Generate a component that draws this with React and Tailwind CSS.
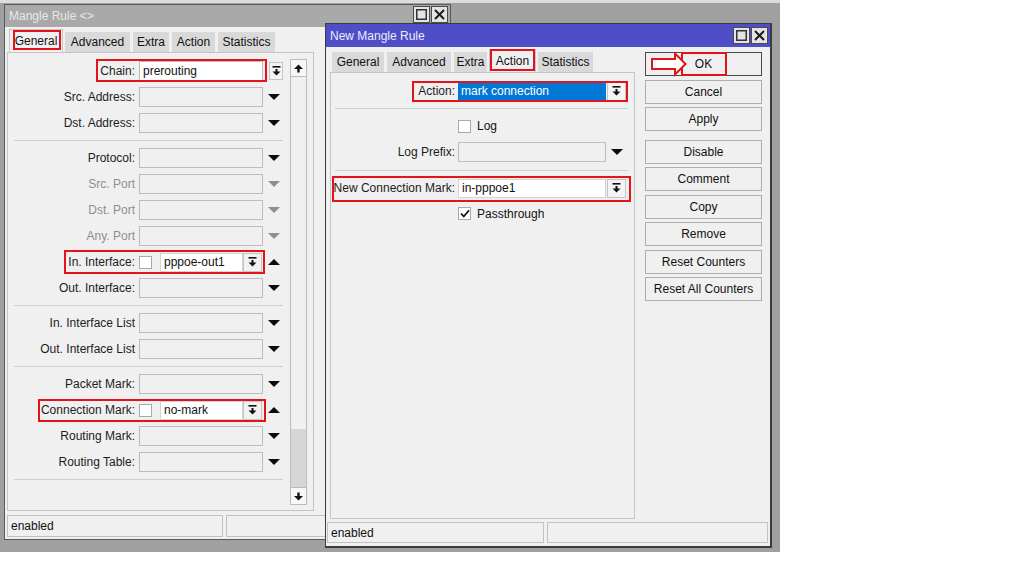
const RED = "border-[#e3131b]";

function DownBar() {
  return (
    <svg width="9" height="10" viewBox="0 0 9 10">
      <rect x="0.5" y="0" width="8" height="1.6" fill="#111" />
      <rect x="3.5" y="3" width="2" height="3" fill="#111" />
      <polygon points="0.5,5.5 8.5,5.5 4.5,9.5" fill="#111" />
    </svg>
  );
}

function TriDown({ dim }) {
  return (
    <svg width="12" height="6" viewBox="0 0 12 6">
      <polygon points="0,0 12,0 6,6" fill={dim ? "#8f8f8f" : "#0c0c0c"} />
    </svg>
  );
}

function TriUp() {
  return (
    <svg width="12" height="6" viewBox="0 0 12 6">
      <polygon points="0,6 12,6 6,0" fill="#0c0c0c" />
    </svg>
  );
}

function ScrollArrow({ up }) {
  return (
    <svg width="9" height="9" viewBox="0 0 9 9">
      {up ? (
        <>
          <polygon points="4.5,0.5 9,5 0,5" fill="#111" />
          <rect x="3.3" y="5" width="2.4" height="3.5" fill="#111" />
        </>
      ) : (
        <>
          <rect x="3.3" y="0.5" width="2.4" height="3.5" fill="#111" />
          <polygon points="0,4 9,4 4.5,8.5" fill="#111" />
        </>
      )}
    </svg>
  );
}

function TitleButtons() {
  return (
    <div className="flex gap-[1px]">
      <span className="flex h-[17px] w-[17px] items-center justify-center border border-[#4a4a4a] bg-[#e4e4e4]">
        <svg width="11" height="11" viewBox="0 0 11 11">
          <rect x="0.75" y="0.75" width="9.5" height="9.5" fill="none" stroke="#333" strokeWidth="1.5" />
        </svg>
      </span>
      <span className="flex h-[17px] w-[17px] items-center justify-center border border-[#4a4a4a] bg-[#e4e4e4]">
        <svg width="11" height="11" viewBox="0 0 11 11">
          <path d="M1 1 L10 10 M10 1 L1 10" stroke="#1a1a1a" strokeWidth="2" />
        </svg>
      </span>
    </div>
  );
}

function Tab({ label, width, active, redBox }) {
  return (
    <div
      className={`relative flex items-center justify-center ${width} ${
        active
          ? "h-[23px] border border-b-0 border-[#c6c6c6] bg-[#f0f0f0]"
          : "h-[21px] border border-b-0 border-[#f0f0f0] bg-[#d9d9d9]"
      } text-[#111]`}
    >
      {label}
      {redBox && <div className={`absolute ${redBox} border-2 ${RED}`} />}
    </div>
  );
}

function Label({ children, dim, w }) {
  return (
    <div className={`${w} shrink-0 whitespace-nowrap text-right ${dim ? "text-[#8e8e8e]" : "text-[#1c1c1c]"}`}>
      {children}
    </div>
  );
}

function Sep({ h, w, ml }) {
  return (
    <div className={`flex ${h} items-center`}>
      <div className={`${ml} ${w} h-[1px] bg-[#cfcfcf]`} />
    </div>
  );
}

function Checkbox({ checked }) {
  return (
    <span className="flex h-[13px] w-[13px] shrink-0 items-center justify-center border border-[#a9a9a9] bg-white">
      {checked && (
        <svg width="10" height="9" viewBox="0 0 10 9">
          <path d="M1 4.5 L3.8 7.5 L9 1.2" fill="none" stroke="#111" strokeWidth="1.8" />
        </svg>
      )}
    </span>
  );
}

function EmptyRow({ label, dim }) {
  return (
    <div className="flex h-[26px] items-center">
      <Label w="w-[127px]" dim={dim}>
        {label}
      </Label>
      <div className="ml-[4px] h-[20px] w-[124px] border border-[#bcbcbc] bg-[#f0f0f0]" />
      <div className="ml-[5px] flex">
        <TriDown dim={dim} />
      </div>
    </div>
  );
}

function CheckRow({ label, value, redBox }) {
  return (
    <div className="relative flex h-[26px] items-center">
      <Label w="w-[127px]">{label}</Label>
      <div className="ml-[4px]">
        <Checkbox />
      </div>
      <div className="ml-[8px] flex h-[19px] w-[83px] items-center border border-[#d4d4d4] bg-white pl-[3px] text-[#111]">
        {value}
      </div>
      <div className="flex h-[19px] w-[19px] items-center justify-center border border-[#c4c4c4] bg-[#f2f2f2]">
        <DownBar />
      </div>
      <div className="ml-[6px] flex">
        <TriUp />
      </div>
      <div className={`absolute ${redBox} border-2 ${RED}`} />
    </div>
  );
}

function LeftWindow() {
  return (
    <div className="absolute left-[4px] top-[1px] flex h-[536px] w-[447px] flex-col border border-[#5a5a5a] bg-[#f0f0f0]">
      <div className="flex h-[22px] items-start justify-between bg-[#a9a9a9] pl-[4px] pr-[2px] pt-[1px]">
        <span className="leading-[20px] text-[#e8e8e8]">Mangle Rule &lt;&gt;</span>
        <TitleButtons />
      </div>
      <div className="flex h-[25px] items-end gap-[1px] pl-[4px]">
        <Tab label="General" width="w-[54px]" active redBox="left-[3px] right-[1px] top-[0px] bottom-[2px]" />
        <Tab label="Advanced" width="w-[67px]" />
        <Tab label="Extra" width="w-[38px]" />
        <Tab label="Action" width="w-[45px]" />
        <Tab label="Statistics" width="w-[59px]" />
      </div>
      <div className="ml-[2px] flex h-[459px] w-[307px] border border-[#c6c6c6]">
        <div className="flex flex-1 flex-col pt-[5px]">
          <div className="relative flex h-[26px] items-center">
            <Label w="w-[127px]">Chain:</Label>
            <div className="ml-[4px] flex h-[20px] w-[124px] items-center border border-[#bcbcbc] bg-white pl-[3px] text-[#111]">
              prerouting
            </div>
            <div className="ml-[6px] flex h-[18px] w-[14px] items-center justify-center border border-[#c4c4c4] bg-[#f4f4f4]">
              <DownBar />
            </div>
            <div className={`absolute left-[88px] top-[1px] h-[23px] w-[171px] border-2 ${RED}`} />
          </div>
          <EmptyRow label="Src. Address:" />
          <EmptyRow label="Dst. Address:" />
          <Sep h="h-[9px]" w="w-[269px]" ml="ml-[6px]" />
          <EmptyRow label="Protocol:" />
          <EmptyRow label="Src. Port" dim />
          <EmptyRow label="Dst. Port" dim />
          <EmptyRow label="Any. Port" dim />
          <CheckRow label="In. Interface:" value="pppoe-out1" redBox="left-[56px] top-[1px] h-[24px] w-[201px]" />
          <EmptyRow label="Out. Interface:" />
          <Sep h="h-[9px]" w="w-[269px]" ml="ml-[6px]" />
          <EmptyRow label="In. Interface List" />
          <EmptyRow label="Out. Interface List" />
          <Sep h="h-[9px]" w="w-[269px]" ml="ml-[6px]" />
          <EmptyRow label="Packet Mark:" />
          <CheckRow label="Connection Mark:" value="no-mark" redBox="left-[30px] top-[2px] h-[23px] w-[228px]" />
          <EmptyRow label="Routing Mark:" />
          <EmptyRow label="Routing Table:" />
          <Sep h="h-[9px]" w="w-[269px]" ml="ml-[6px]" />
        </div>
        <div className="mb-[5px] mr-[6px] mt-[6px] flex w-[17px] flex-col border border-[#bcbcbc] bg-[#f0f0f0]">
          <div className="flex h-[17px] items-center justify-center border-b border-[#bcbcbc] bg-[#f7f7f7]">
            <ScrollArrow up />
          </div>
          <div className="flex-1" />
          <div className="h-[58px] bg-[#d6d6d6]" />
          <div className="flex h-[17px] items-center justify-center border-t border-[#bcbcbc] bg-[#f7f7f7]">
            <ScrollArrow />
          </div>
        </div>
      </div>
      <div className="ml-[2px] mt-[4px] flex gap-[3px]">
        <div className="flex h-[22px] w-[216px] items-center border border-[#c2c2c2] pl-[3px] text-[#111]">enabled</div>
        <div className="h-[22px] w-[221px] border border-[#c2c2c2]" />
      </div>
    </div>
  );
}

function Btn({ children, mt, primary }) {
  return (
    <div
      className={`${mt} flex h-[24px] w-[117px] items-center justify-center border ${
        primary ? "border-[#4a4a4a]" : "border-[#adadad]"
      } bg-[#f0f0f0] text-[#111]`}
    >
      {children}
    </div>
  );
}

function RightWindow() {
  return (
    <div className="absolute left-[325px] top-[20px] flex h-[525px] w-[447px] flex-col border border-b-2 border-r-2 border-[#3c3c3c] bg-[#f0f0f0]">
      <div className="flex h-[23px] items-center justify-between bg-[#4e4ec6] pl-[4px] pr-[2px]">
        <span className="text-[#ececff]">New Mangle Rule</span>
        <TitleButtons />
      </div>
      <div className="flex">
        <div className="ml-[4px] flex flex-col">
          <div className="flex h-[25px] items-end gap-[1px] pl-[1px]">
            <Tab label="General" width="w-[54px]" />
            <Tab label="Advanced" width="w-[66px]" />
            <Tab label="Extra" width="w-[35px]" />
            <Tab label="Action" width="w-[47px]" active redBox="left-[0px] right-[0px] top-[-1px] bottom-[1px]" />
            <Tab label="Statistics" width="w-[57px]" />
          </div>
          <div className="flex h-[447px] w-[305px] flex-col border border-[#c6c6c6] pt-[5px]">
            <div className="relative flex h-[26px] items-center">
              <Label w="w-[124px]">Action:</Label>
              <div className="ml-[3px] flex h-[20px] w-[148px] items-center bg-[#0078d7] pl-[3px] text-white">
                mark connection
              </div>
              <div className="ml-[1px] flex h-[20px] w-[19px] items-center justify-center border border-[#c4c4c4] bg-[#f4f4f4]">
                <DownBar />
              </div>
              <div className={`absolute left-[81px] top-[3px] h-[21px] w-[216px] border-2 ${RED}`} />
            </div>
            <Sep h="h-[9px]" w="w-[293px]" ml="ml-[4px]" />
            <div className="flex h-[26px] items-center">
              <div className="ml-[127px]">
                <Checkbox />
              </div>
              <span className="ml-[6px] text-[#111]">Log</span>
            </div>
            <div className="flex h-[26px] items-center">
              <Label w="w-[124px]">Log Prefix:</Label>
              <div className="ml-[3px] h-[20px] w-[148px] border border-[#bcbcbc] bg-[#f0f0f0]" />
              <div className="ml-[5px] flex">
                <TriDown />
              </div>
            </div>
            <Sep h="h-[10px]" w="w-[293px]" ml="ml-[4px]" />
            <div className="relative flex h-[26px] items-center">
              <Label w="w-[124px]">New Connection Mark:</Label>
              <div className="ml-[3px] flex h-[19px] w-[148px] items-center border border-[#d4d4d4] bg-white pl-[3px] text-[#111]">
                in-pppoe1
              </div>
              <div className="ml-[1px] flex h-[19px] w-[19px] items-center justify-center border border-[#c4c4c4] bg-[#f4f4f4]">
                <DownBar />
              </div>
              <div className={`absolute left-[1px] top-[1px] h-[26px] w-[299px] border-2 ${RED}`} />
            </div>
            <div className="flex h-[25px] items-center">
              <div className="ml-[127px]">
                <Checkbox checked />
              </div>
              <span className="ml-[6px] text-[#111]">Passthrough</span>
            </div>
          </div>
        </div>
        <div className="relative ml-[10px] mt-[5px] flex flex-col">
          <Btn primary>
            <span className="relative flex h-[24px] w-[46px] items-center justify-center">
              OK
              <span className={`absolute inset-0 border-2 ${RED}`} />
            </span>
          </Btn>
          <Btn mt="mt-[4px]">Cancel</Btn>
          <Btn mt="mt-[3px]">Apply</Btn>
          <Btn mt="mt-[9px]">Disable</Btn>
          <Btn mt="mt-[3px]">Comment</Btn>
          <Btn mt="mt-[4px]">Copy</Btn>
          <Btn mt="mt-[3px]">Remove</Btn>
          <Btn mt="mt-[4px]">Reset Counters</Btn>
          <Btn mt="mt-[3px]">Reset All Counters</Btn>
          <svg className="absolute left-[5px] top-[0px]" width="38" height="25" viewBox="0 0 38 25">
            <path d="M2 7 H25 V1.5 L35.5 12 L25 22.5 V17 H2 Z" fill="white" stroke="#e3131b" strokeWidth="2" />
          </svg>
        </div>
      </div>
      <div className="ml-[1px] mt-[3px] flex gap-[3px]">
        <div className="flex h-[21px] w-[217px] items-center border border-[#c2c2c2] pl-[3px] text-[#111]">enabled</div>
        <div className="h-[21px] w-[221px] border border-[#c2c2c2]" />
      </div>
    </div>
  );
}

export default function App() {
  return (
    <div className="h-[576px] w-[1024px] bg-white font-['Liberation_Sans',Arial,sans-serif] text-[12px]">
      <div className="relative h-[552px] w-[780px] border-t-[3px] border-[#dcdcdc] bg-[#a0a0a0]">
        <LeftWindow />
        <RightWindow />
      </div>
    </div>
  );
}
